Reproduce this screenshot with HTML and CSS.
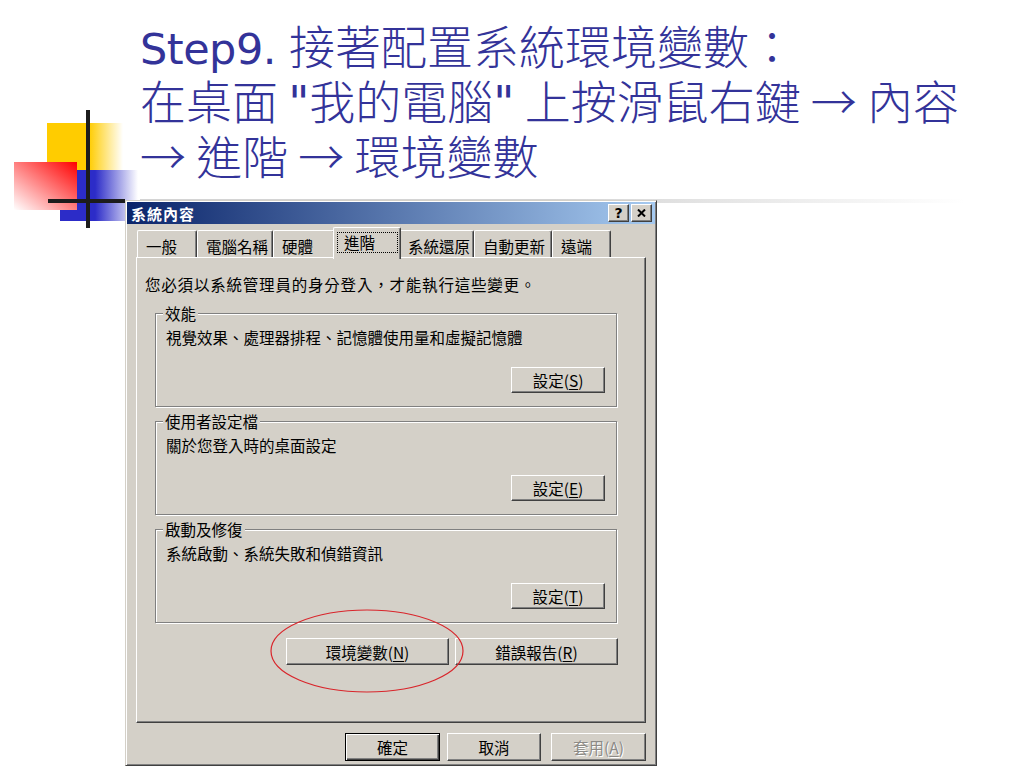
FILE: index.html
```html
<!DOCTYPE html>
<html lang="zh-Hant">
<head>
    <meta charset="UTF-8">
    <meta name="viewport" content="width=device-width, initial-scale=1.0">
    <title>Step9 環境變數</title>
    <link rel="stylesheet" href="styles.css">
</head>
<body>
    <div class="slide">
        <div class="logo" aria-hidden="true">
            <span class="yellow"></span>
            <span class="blue"></span>
            <span class="red"></span>
            <span class="bar-v"></span>
            <span class="bar-h"></span>
        </div>

        <h1 class="title"><span class="latin step">Step9. </span>接著配置系統環境變數<span class="colon">：</span><br>在桌面 <span class="latin">"</span>我的電腦<span class="latin">"</span> 上按滑鼠右鍵 → 內容<br>→ 進階 → 環境變數</h1>
        <div class="rule"></div>

        <div class="dialog">
            <div class="titlebar">
                <span class="caption">系統內容</span>
                <div class="caption-btns">
                    <span class="cap-btn help">?</span>
                    <span class="cap-btn close">
                        <svg width="9" height="8" viewBox="0 0 9 8"><path d="M1 0.5 L8 7.5 M8 0.5 L1 7.5" stroke="#000" stroke-width="2"/></svg>
                    </span>
                </div>
            </div>

            <div class="tabs">
                <div class="tab t1">一般</div>
                <div class="tab t2">電腦名稱</div>
                <div class="tab t3">硬體</div>
                <div class="tab t4 active"><span class="focus">進階</span></div>
                <div class="tab t5">系統還原</div>
                <div class="tab t6">自動更新</div>
                <div class="tab t7">遠端</div>
            </div>

            <div class="panel">
                <p class="note">您必須以系統管理員的身分登入，才能執行這些變更。</p>

                <div class="group">
                    <span class="group-label">效能</span>
                    <p class="group-text">視覺效果、處理器排程、記憶體使用量和虛擬記憶體</p>
                    <div class="group-actions"><button class="btn">設定(<u>S</u>)</button></div>
                </div>

                <div class="group">
                    <span class="group-label">使用者設定檔</span>
                    <p class="group-text">關於您登入時的桌面設定</p>
                    <div class="group-actions"><button class="btn">設定(<u>E</u>)</button></div>
                </div>

                <div class="group">
                    <span class="group-label">啟動及修復</span>
                    <p class="group-text">系統啟動、系統失敗和偵錯資訊</p>
                    <div class="group-actions"><button class="btn">設定(<u>T</u>)</button></div>
                </div>

                <div class="panel-actions">
                    <div class="circled">
                        <button class="btn wide">環境變數(<u>N</u>)</button>
                        <svg class="mark" width="196" height="86" viewBox="0 0 196 86"><ellipse cx="98" cy="43" rx="96" ry="41" fill="none" stroke="#d9252b" stroke-width="1.2"/></svg>
                    </div>
                    <button class="btn wide">錯誤報告(<u>R</u>)</button>
                </div>
            </div>

            <div class="footer">
                <button class="btn default">確定</button>
                <button class="btn cancel">取消</button>
                <button class="btn apply" disabled>套用(<u>A</u>)</button>
            </div>
        </div>
    </div>
</body>
</html>
```

FILE: styles.css
```css
* {
    box-sizing: border-box;
}
body {
    margin: 0;
    background: #fff;
}
.slide {
    position: relative;
    width: 1024px;
    height: 768px;
    overflow: hidden;
}

/* decoration at the top left */
.logo span {
    position: absolute;
    display: block;
}
.logo .yellow {
    left: 47px;
    top: 123px;
    width: 76px;
    height: 47px;
    background: linear-gradient(to right, #ffcc00 55%, #ffffff);
}
.logo .blue {
    left: 60px;
    top: 170px;
    width: 78px;
    height: 51px;
    background: linear-gradient(to right, #2c2cc8 45%, #ffffff);
}
.logo .red {
    left: 14px;
    top: 162px;
    width: 63px;
    height: 48px;
    background: linear-gradient(to bottom left, #ff0000, #ffffff);
}
.logo .bar-v {
    left: 86px;
    top: 110px;
    width: 4px;
    height: 118px;
    background: #1c1c1c;
}
.logo .bar-h {
    left: 48px;
    top: 199px;
    width: 77px;
    height: 4px;
    background: #1c1c1c;
}

.title {
    height: 182px;
    margin: 0;
    padding: 17px 0 0 140px;
    font-family: "Noto Sans CJK TC", sans-serif;
    font-size: 46px;
    font-weight: 300;
    line-height: 55px;
    color: #333399;
}
.title .latin {
    font-family: "DejaVu Sans", sans-serif;
    font-weight: 400;
    line-height: 0;
}
.title .step {
    font-size: 43px;
    letter-spacing: -0.5px;
}
.title .colon {
    font-family: "Noto Sans CJK JP", sans-serif;
    line-height: 0;
}
.rule {
    width: 825px;
    height: 4px;
    margin: 17px 0 0 140px;
    background: linear-gradient(to right, #d4d4d4 50%, #ffffff);
}

/* the dialog */
.dialog {
    position: relative;
    z-index: 1;
    width: 532px;
    height: 566px;
    margin: -3px 0 0 125px;
    padding: 1px;
    display: flex;
    flex-direction: column;
    background: #d4d0c8;
    border: 1px solid;
    border-color: #d4d0c8 #404040 #404040 #d4d0c8;
    box-shadow: inset 1px 1px #fff, inset -1px -1px #808080;
    font-family: "Noto Sans CJK TC", sans-serif;
    font-size: 15.5px;
    color: #000;
}
.titlebar {
    height: 22px;
    display: flex;
    align-items: center;
    padding: 0 3px 0 4px;
    background: linear-gradient(to right, #0a246a, #a6caf0);
}
.caption {
    color: #fff;
    font-weight: bold;
    font-size: 15px;
    letter-spacing: 1px;
}
.caption-btns {
    margin-left: auto;
    display: flex;
    gap: 2px;
}
.cap-btn {
    width: 21px;
    height: 18px;
    display: flex;
    align-items: center;
    justify-content: center;
    background: #d4d0c8;
    border: 1px solid;
    border-color: #fff #404040 #404040 #fff;
    box-shadow: inset -1px -1px #808080;
    font: bold 14px "DejaVu Sans", sans-serif;
}

.tabs {
    height: 33px;
    display: flex;
    align-items: flex-end;
    padding-left: 10px;
}
.tab {
    height: 27px;
    padding: 5px 0 0 8px;
    line-height: 20px;
    background: #d4d0c8;
    border-top: 1px solid #fff;
    border-left: 1px solid #fff;
    border-right: 1px solid #404040;
    border-radius: 2px 2px 0 0;
    box-shadow: inset -1px 0 #808080;
    white-space: nowrap;
}
.t1 { width: 60px; }
.t2 { width: 76px; }
.t3 { width: 62px; }
.t5 { width: 75px; }
.t6 { width: 78px; }
.t7 { width: 59px; }
.tab.active {
    position: relative;
    z-index: 2;
    height: 32px;
    margin: 0 -2px -2px;
    width: 68px;
    padding: 4px 0 0 3px;
}
.focus {
    display: block;
    width: 61px;
    height: 21px;
    padding-left: 6px;
    line-height: 19px;
    border: 1px dotted #000;
}

.panel {
    height: 466px;
    margin: 0 9px;
    padding: 17px 0 0 8px;
    border: 1px solid;
    border-color: #fff #404040 #404040 #fff;
    box-shadow: inset -1px -1px #808080;
}
.note {
    margin: 0;
    line-height: 18px;
    letter-spacing: 0.8px;
}
.group {
    position: relative;
    height: 94px;
    margin: 20px 28px 0 10px;
    padding: 14px 11px 0 10px;
    border: 1px solid #808080;
    box-shadow: inset 1px 1px #fff, 1px 1px #fff;
}
.group + .group {
    margin-top: 14px;
}
.group-label {
    position: absolute;
    left: 7px;
    top: -10px;
    padding: 0 2px;
    line-height: 18px;
    background: #d4d0c8;
}
.group-text {
    margin: 0;
    line-height: 18px;
}
.group-actions {
    display: flex;
    justify-content: flex-end;
    margin-top: 21px;
}

.btn {
    width: 94px;
    height: 26px;
    padding: 0;
    font-family: "Noto Sans CJK TC", sans-serif;
    font-size: 15.5px;
    color: #000;
    background: #d4d0c8;
    border: 1px solid;
    border-color: #fff #404040 #404040 #fff;
    box-shadow: inset -1px -1px #808080;
}
.btn u {
    text-underline-offset: 2px;
}
.panel-actions {
    display: flex;
    justify-content: flex-end;
    gap: 6px;
    margin: 15px 27px 0 0;
}
.btn.wide {
    width: 163px;
    height: 27px;
}
.circled {
    position: relative;
}
.mark {
    position: absolute;
    left: -17px;
    top: -30px;
    pointer-events: none;
}

.footer {
    display: flex;
    justify-content: flex-end;
    padding: 10px 9px 0 0;
}
.footer .btn {
    height: 28px;
}
.btn.default {
    width: 95px;
    border: 1px solid #000;
    box-shadow: inset 1px 1px #fff, inset -1px -1px #404040, inset -2px -2px #808080;
}
.btn.cancel {
    margin-left: 7px;
}
.btn.apply {
    width: 95px;
    margin-left: 10px;
    color: #8c8a86;
    text-shadow: 1px 1px #fff;
}
```
